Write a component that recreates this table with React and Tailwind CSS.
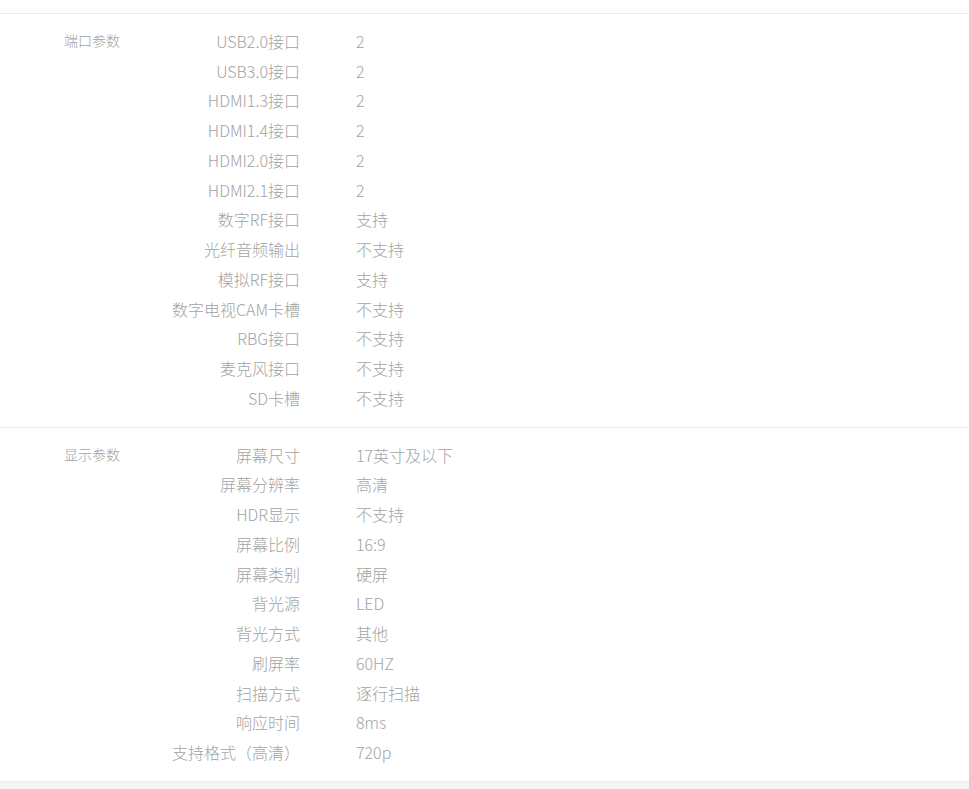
const sections = [
  {
    title: '端口参数',
    rows: [
      ['USB2.0接口', '2'],
      ['USB3.0接口', '2'],
      ['HDMI1.3接口', '2'],
      ['HDMI1.4接口', '2'],
      ['HDMI2.0接口', '2'],
      ['HDMI2.1接口', '2'],
      ['数字RF接口', '支持'],
      ['光纤音频输出', '不支持'],
      ['模拟RF接口', '支持'],
      ['数字电视CAM卡槽', '不支持'],
      ['RBG接口', '不支持'],
      ['麦克风接口', '不支持'],
      ['SD卡槽', '不支持'],
    ],
  },
  {
    title: '显示参数',
    rows: [
      ['屏幕尺寸', '17英寸及以下'],
      ['屏幕分辨率', '高清'],
      ['HDR显示', '不支持'],
      ['屏幕比例', '16:9'],
      ['屏幕类别', '硬屏'],
      ['背光源', 'LED'],
      ['背光方式', '其他'],
      ['刷屏率', '60HZ'],
      ['扫描方式', '逐行扫描'],
      ['响应时间', '8ms'],
      ['支持格式（高清）', '720p'],
    ],
  },
];

function Section({ title, rows }) {
  return (
    <div className="flex border-t border-[#ececec] pt-[12px] pb-[14px]">
      <div className="w-[170px] shrink-0 pl-[64px] h-[29.75px] flex items-center text-[14px]">
        {title}
      </div>
      <div className="flex flex-col">
        {rows.map(([k, v]) => (
          <div key={k} className="flex h-[29.75px] items-center text-[16px]">
            <div className="w-[130px] text-right whitespace-nowrap">{k}</div>
            <div className="ml-[56px] whitespace-nowrap">{v}</div>
          </div>
        ))}
      </div>
    </div>
  );
}

export default function App() {
  return (
    <div
      className="min-h-[789px] bg-[#f5f5f5] text-[#a3a3a3] font-light"
      style={{ fontFamily: '"Noto Sans CJK SC", "Noto Sans", sans-serif' }}
    >
      <div className="bg-white pt-[13px] border-b border-[#ececec]">
        {sections.map((s) => (
          <Section key={s.title} {...s} />
        ))}
      </div>
    </div>
  );
}
